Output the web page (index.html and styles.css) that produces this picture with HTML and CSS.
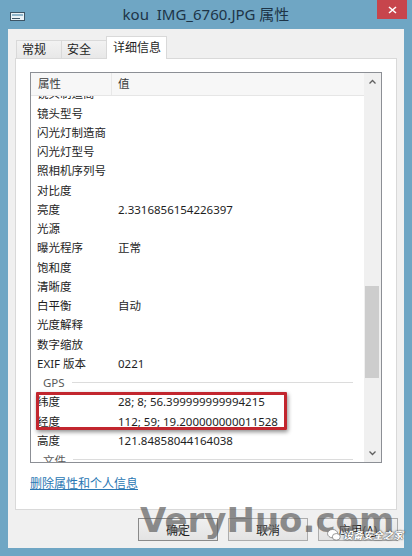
FILE: index.html
```html
<!DOCTYPE html>
<html lang="zh-CN">
<head>
  <meta charset="UTF-8" />
  <meta name="viewport" content="width=device-width, initial-scale=1.0"/>
  <title>kou IMG_6760.JPG 属性</title>
  <link rel="stylesheet" href="styles.css">
</head>
<body>
  <div class="window">
    <header class="titlebar">
      <svg class="app-icon" width="15" height="9" viewBox="0 0 15 9">
        <rect x="0.5" y="0.5" width="14" height="8" fill="#e9f2f7" stroke="#3d5566"/>
        <rect x="2" y="2" width="11" height="2" fill="#8fb6cc"/>
        <path d="M2 6.5h8" stroke="#3d5566" stroke-width="1"/>
      </svg>
      <h1 class="title">kou  IMG_6760.JPG 属性</h1>
      <button class="close-btn">
        <svg width="9" height="8" viewBox="0 0 9 8"><path d="M1 1l7 6M8 1L1 7" stroke="#fff" stroke-width="1.6"/></svg>
      </button>
    </header>

    <div class="client">
      <nav class="tabs">
        <span class="tab">常规</span>
        <span class="tab">安全</span>
        <span class="tab active">详细信息</span>
      </nav>

      <section class="panel">
        <div class="listbox">
          <div class="list-main">
            <div class="list-head"><span>属性</span><span>值</span></div>
            <div class="list-view">
              <div class="rows">
                <div class="row"><span>镜头制造商</span><span></span></div>
                <div class="row"><span>镜头型号</span><span></span></div>
                <div class="row"><span>闪光灯制造商</span><span></span></div>
                <div class="row"><span>闪光灯型号</span><span></span></div>
                <div class="row"><span>照相机序列号</span><span></span></div>
                <div class="row"><span>对比度</span><span></span></div>
                <div class="row"><span>亮度</span><span>2.3316856154226397</span></div>
                <div class="row"><span>光源</span><span></span></div>
                <div class="row"><span>曝光程序</span><span>正常</span></div>
                <div class="row"><span>饱和度</span><span></span></div>
                <div class="row"><span>清晰度</span><span></span></div>
                <div class="row"><span>白平衡</span><span>自动</span></div>
                <div class="row"><span>光度解释</span><span></span></div>
                <div class="row"><span>数字缩放</span><span></span></div>
                <div class="row"><span>EXIF 版本</span><span>0221</span></div>
                <div class="group"><span>GPS</span><i class="group-line"></i></div>
                <div class="mark">
                  <div class="row"><span>纬度</span><span>28; 8; 56.399999999994215</span></div>
                  <div class="row"><span>经度</span><span>112; 59; 19.200000000011528</span></div>
                </div>
                <div class="row"><span>高度</span><span>121.84858044164038</span></div>
                <div class="group"><span>文件</span><i class="group-line"></i></div>
              </div>
            </div>
          </div>
          <div class="scrollbar">
            <div class="arrow">
              <svg width="7" height="5" viewBox="0 0 7 5"><path d="M0.5 4.5l3-3 3 3" fill="none" stroke="#606060" stroke-width="1.3"/></svg>
            </div>
            <div class="track"><div class="thumb"></div></div>
            <div class="arrow">
              <svg width="7" height="5" viewBox="0 0 7 5"><path d="M0.5 0.5l3 3 3-3" fill="none" stroke="#606060" stroke-width="1.3"/></svg>
            </div>
          </div>
        </div>
        <a class="remove-link" href="#">删除属性和个人信息</a>
      </section>

      <div class="actions">
        <button class="btn default">确定</button>
        <button class="btn">取消</button>
        <button class="btn">应用(<u>A</u>)</button>
      </div>
    </div>

    <div class="watermark">VeryHuo.com</div>
    <div class="wechat">
      <svg width="14" height="12" viewBox="0 0 15 13">
        <ellipse cx="6" cy="5" rx="5.5" ry="4.5" fill="#fff" stroke="#777" stroke-width="0.8"/>
        <ellipse cx="10" cy="8.5" rx="4.3" ry="3.6" fill="#fff" stroke="#777" stroke-width="0.8"/>
      </svg>
      <span>设备安全之家</span>
    </div>
  </div>
</body>
</html>
```

FILE: styles.css
```css
:root {
  --frame: #6fa6c4;
  --client: #f0f0f0;
  --line: #d9d9d9;
  --text: #1e1e1e;
}

body {
  margin: 0;
  background: var(--frame);
  font-family: "Noto Sans", "Noto Sans CJK SC", sans-serif;
  color: var(--text);
}

.window {
  position: relative;
  width: 412px;
  height: 556px;
  background: var(--frame);
  overflow: hidden;
}

/* title bar */
.titlebar {
  display: grid;
  grid-template-columns: 1fr auto 1fr;
  align-items: start;
  height: 29px;
}

.app-icon {
  margin: 12px 0 0 10px;
}

.title {
  margin: 0;
  font-size: 15px;
  font-weight: normal;
  line-height: 28px;
  color: #1d3447;
  white-space: pre;
}

.close-btn {
  justify-self: end;
  margin-right: 5px;
  width: 30px;
  height: 19px;
  padding: 0;
  border: none;
  background: #c7454c;
  display: flex;
  align-items: center;
  justify-content: center;
}

/* dialog body */
.client {
  margin: 0 8px;
  height: 519px;
  padding: 7px 7px 0;
  box-sizing: border-box;
  background: var(--client);
}

.tabs {
  display: flex;
  align-items: flex-end;
  height: 23px;
  padding-left: 1px;
  margin-bottom: -1px;
  position: relative;
  z-index: 1;
}

.tab {
  box-sizing: border-box;
  height: 18px;
  width: 46px;
  margin-bottom: 1px;
  margin-right: -1px;
  padding: 0 5px;
  border: 1px solid var(--line);
  border-bottom: none;
  background: linear-gradient(#f2f2f2, #e8e8e8);
  font-size: 12px;
  line-height: 17px;
  white-space: nowrap;
}

.tab.active {
  height: 23px;
  width: auto;
  margin-bottom: 0;
  padding: 0 5px 0 6px;
  background: #fff;
  line-height: 22px;
}

.panel {
  height: 452px;
  box-sizing: border-box;
  padding: 13px 14px 0;
  border: 1px solid var(--line);
  background: #fff;
}

.listbox {
  display: flex;
  height: 391px;
  box-sizing: border-box;
  border: 1px solid #8c8f95;
  background: #fff;
}

.list-main {
  flex: 1;
  display: flex;
  flex-direction: column;
  min-width: 0;
}

.list-head {
  display: grid;
  grid-template-columns: 80px 1fr;
  height: 22px;
  padding-left: 7px;
  border-bottom: 1px solid #e6e6e6;
  background: #f7f7f7;
  font-size: 11.5px;
  line-height: 22px;
  color: #3b3b3b;
}

.list-head span:first-child {
  border-right: 1px solid #e8e8e8;
  margin-right: 6px;
}

.list-view {
  flex: 1;
  overflow: hidden;
}

.rows {
  margin-top: -11.6px;
}

.row {
  display: grid;
  grid-template-columns: 81px 1fr;
  height: 19.25px;
  padding-left: 6px;
  font-size: 11.5px;
  line-height: 19.25px;
  white-space: nowrap;
}

.group {
  display: flex;
  align-items: center;
  height: 19.25px;
  padding: 0 11px 0 12px;
  font-size: 11.5px;
  color: #5a5a5a;
}

.group-line {
  flex: 1;
  height: 1px;
  margin-left: 7px;
  background: #dcdcdc;
}

.mark {
  position: relative;
}

.mark::after {
  content: "";
  position: absolute;
  left: 5px;
  top: 0;
  width: 251px;
  height: 38px;
  box-sizing: border-box;
  border: 3px solid #c2262e;
  border-radius: 1px;
  box-shadow: 1px 2px 4px rgba(0, 0, 0, 0.45);
}

/* scrollbar */
.scrollbar {
  width: 17px;
  display: flex;
  flex-direction: column;
  background: #f0f0f0;
}

.arrow {
  height: 17px;
  display: flex;
  align-items: center;
  justify-content: center;
}

.track {
  flex: 1;
}

.thumb {
  width: 14px;
  height: 92px;
  margin: 196px 0 0 1px;
  background: #cdcdcd;
}

.remove-link {
  display: inline-block;
  margin-top: 13px;
  font-size: 12px;
  line-height: 16px;
  color: #2a77b3;
}

/* buttons */
.actions {
  display: flex;
  justify-content: flex-end;
  gap: 10px;
  margin: 8px -1px 0 0;
}

.btn {
  width: 80px;
  height: 23px;
  box-sizing: border-box;
  border: 1px solid #adadad;
  background: linear-gradient(#f0f0f0, #e3e3e3);
  font-family: inherit;
  font-size: 12px;
  color: var(--text);
  padding: 0;
}

.btn.default {
  border-color: #8a8a8a;
}

/* overlay marks on the picture */
.watermark {
  position: absolute;
  left: 140px;
  top: 503px;
  font-family: "DejaVu Sans", sans-serif;
  font-weight: bold;
  font-size: 34px;
  line-height: 34px;
  color: rgba(100, 100, 100, 0.72);
  white-space: nowrap;
}

.wechat {
  position: absolute;
  left: 327px;
  top: 528px;
  display: flex;
  align-items: center;
  gap: 2px;
  font-size: 10px;
  line-height: 14px;
  font-style: italic;
  font-weight: bold;
  color: #fff;
  white-space: nowrap;
  text-shadow: 0 0 2px #333, 0 0 1px #333;
}
```
